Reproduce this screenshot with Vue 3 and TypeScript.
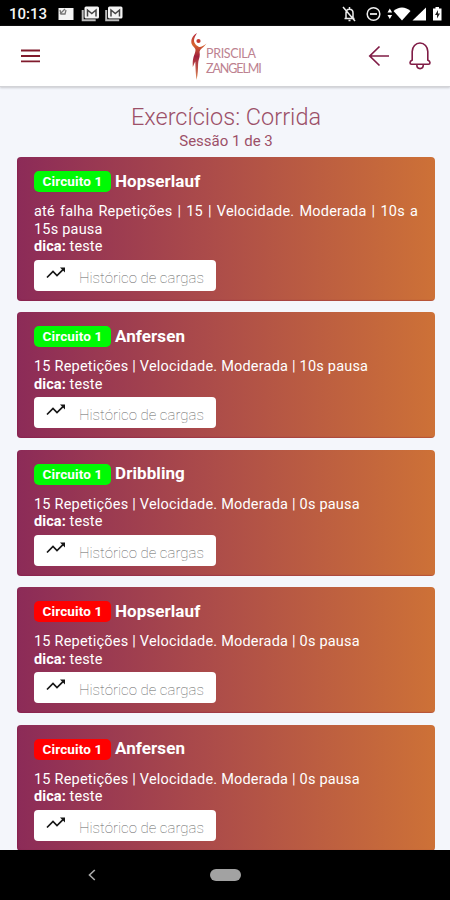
<script setup lang="ts">
interface Exercise {
  name: string
  done: boolean
  details: string
  justified?: boolean
}

const exercises: Exercise[] = [
  { name: 'Hopserlauf', done: true, details: 'até falha Repetições | 15 | Velocidade. Moderada | 10s a 15s pausa', justified: true },
  { name: 'Anfersen', done: true, details: '15 Repetições | Velocidade. Moderada | 10s pausa' },
  { name: 'Dribbling', done: true, details: '15 Repetições | Velocidade. Moderada | 0s pausa' },
  { name: 'Hopserlauf', done: false, details: '15 Repetições | Velocidade. Moderada | 0s pausa' },
  { name: 'Anfersen', done: false, details: '15 Repetições | Velocidade. Moderada | 0s pausa' },
]
</script>

<template>
  <div class="screen">
    <div class="status">
      <span class="clock">10:13</span>
      <svg class="status-left" width="66" height="16" viewBox="0 0 66 16">
        <path d="M0.500 2h15v12h-15z" fill="#f4f4f4" />
        <path d="M2 8l5-5M2 4l1 4 4 0 1-4" stroke="#777" stroke-width="1.300" fill="none" />
        <g v-for="x in [24, 47.500]" :key="x" :transform="`translate(${x} 0)`">
          <path d="M0.700 4v10.300h13" fill="none" stroke="#bbb" stroke-width="2" />
          <rect x="2.500" y="0.500" width="14.500" height="12" rx="1.500" fill="#f4f4f4" />
          <path d="M5.500 10.500V4l4.300 3.500L14 4v6.500" fill="none" stroke="#444" stroke-width="1.500" />
        </g>
      </svg>
      <svg class="status-right" width="102" height="18" viewBox="0 0 102 18">
        <g fill="none" stroke="#eee" stroke-width="1.500">
          <path d="M2.500 13.500h10M4 13V8c0-5 7-5 7 0v5M7.500 2v2M6.500 15.500h2M1 2l12 14" />
          <circle cx="31.500" cy="9" r="6.300" />
          <path d="M28 9h7" stroke-width="1.800" />
        </g>
        <g fill="#fff">
          <path d="M45.500 7.500l2.300-4 2.300 4zM45.500 10l2.300 4 2.300-4z" />
          <path d="M51.500 6c5-4.700 12-4.700 17 0L60 15.500z" />
          <path d="M84 2.500v13h-13.500z" />
          <path d="M91 3.500h2.500V2h3.500v1.500H99.500v12h-8.500z" />
        </g>
        <path d="M96 5l-3 5h2v3.500l3-5h-2z" fill="#222" />
      </svg>
    </div>
    <header class="topbar">
      <svg class="menu" width="20" height="16" viewBox="0 0 20 16">
        <path d="M1 2.500h19M1 8h19M1 13.300h19" stroke="#801a2c" stroke-width="1.800" />
      </svg>
      <div class="logo">
        <svg width="16" height="50" viewBox="0 0 16 50">
          <defs>
            <linearGradient id="dancer" x1="0" y1="0" x2="0" y2="1">
              <stop offset="0" stop-color="#b5263c" />
              <stop offset=".25" stop-color="#d8652f" />
              <stop offset=".5" stop-color="#a0203c" />
              <stop offset="1" stop-color="#dc8a55" />
            </linearGradient>
          </defs>
          <path d="M6 2C2.500 4 -.5 8 .5 12.500c.8 2.500 3 3.500 3.800 5.500 .8 2.500-1.300 5.500-2 9-.8 3-.6 6-.5 9 1-2 1.500-4 2.500-5.500.2 7 .5 13 1.200 18.500 1.500-6 1.500-11 1.600-16 .1-4 1.700-6 1.700-9.500 0-1.500-.5-2.500 0-3.500 1-2.500 4-3.500 6.700-7.500-3 2.500-5.500 3.800-7.500 3.500C6.500 15 3 13 3 9.500 3 7 4.500 4.500 6 2z" fill="url(#dancer)" />
          <circle cx="7.500" cy="10" r="2.100" fill="#c33a32" />
        </svg>
        <div class="wordmark"><span class="first">PRISCILA</span><span class="last">ZANGELMI</span></div>
      </div>
      <div class="actions">
        <svg width="22" height="22" viewBox="0 0 22 22">
          <path d="M11.500 1.500L1.800 11l9.700 9.500M1.800 11H21" fill="none" stroke="#801c46" stroke-width="1.700" />
        </svg>
        <svg width="22" height="28" viewBox="0 0 22 28">
          <path d="M3.200 18.800V9.500a7.800 8.500 0 0 1 15.600 0v9.300M3.200 18c-1.200.6-2.200 1.500-2.200 2.700 0 1 .7 1.500 1.500 1.500h17c1 0 1.500-.5 1.500-1.500 0-1.200-1-2.100-2.200-2.700M7.800 22.500c0 5.500 6.500 5.500 6.500 0" fill="none" stroke="#801c46" stroke-width="1.600" />
        </svg>
      </div>
    </header>
    <main class="content">
      <h1>Exercícios: Corrida</h1>
      <h2>Sessão 1 de 3</h2>
      <div class="list">
        <article v-for="(item, i) in exercises" :key="i" class="card">
          <div class="heading">
            <span class="badge" :class="{ done: item.done }">Circuito 1</span>
            <span class="name">{{ item.name }}</span>
          </div>
          <p class="details" :class="{ justified: item.justified }">{{ item.details }}</p>
          <p class="tip"><b>dica:</b> teste</p>
          <button class="history">
            <svg width="20" height="12" viewBox="0 0 20 12">
              <path d="M1 10.500L7 4.500l4 4L18 1.700" fill="none" stroke="#161616" stroke-width="1.700" />
              <path d="M14 .5H19V5.500z" fill="#161616" />
            </svg>
            <span>Histórico de cargas</span>
          </button>
        </article>
      </div>
    </main>
    <nav class="navbar">
      <svg width="8" height="12" viewBox="0 0 8 12">
        <path d="M6.800 1L1.500 6l5.300 5" fill="none" stroke="#aaa" stroke-width="1.600" />
      </svg>
      <span class="pill"></span>
    </nav>
  </div>
</template>

<style>
body { margin: 0; }
</style>

<style scoped>
.screen {
  box-sizing: border-box;
  width: 450px;
  height: 900px;
  display: flex;
  flex-direction: column;
  overflow: hidden;
  background: #f4f6fb;
  font-family: Roboto, "Liberation Sans", sans-serif;
}
.status {
  flex: none;
  height: 26px;
  box-sizing: border-box;
  display: flex;
  align-items: center;
  padding: 2px 6px 0 9px;
  background: #000;
  color: #f5f5f5;
}
.clock { width: 49px; font-size: 15px; font-weight: 500; letter-spacing: 0; white-space: nowrap; }
.status-right { margin-left: auto; }
.topbar {
  flex: none;
  height: 61px;
  box-sizing: border-box;
  display: flex;
  align-items: center;
  padding: 0 19px 0 20px;
  background: #fff;
  border-bottom: 1px solid #d2d3d7;
  box-shadow: 0 1px 2px #c9cacf;
}
.menu { margin-right: 151px; }
.logo { display: flex; align-items: center; }
.wordmark {
  display: flex;
  flex-direction: column;
  padding-top: 10px;
  margin-left: -1px;
  font-family: Lato, sans-serif;
  font-weight: 400;
  font-size: 12.500px;
  line-height: 15px;
  color: #bd8290;
}
.first { letter-spacing: -0.35px; }
.last { letter-spacing: -1.1px; }
.actions { margin-left: auto; display: flex; align-items: center; gap: 19px; }
.content {
  flex: 1;
  min-height: 0;
  overflow: hidden;
  display: flex;
  flex-direction: column;
  padding: 16px 15px 0 17px;
  text-align: center;
}
h1 { margin: 0; font-size: 23.500px; line-height: 28px; font-weight: 300; color: #9c5068; flex: none; }
h2 { margin: 0; font-size: 15px; line-height: 20px; font-weight: 400; color: #9c5068; flex: none; }
.list { display: flex; flex-direction: column; gap: 11.500px; padding-top: 6px; text-align: left; }
.card {
  flex: none;
  box-sizing: border-box;
  padding: 14px 17px 10px;
  border-radius: 4px;
  background: linear-gradient(90deg, #8c2b58 0%, #ad4d49 48%, #cd7137 100%);
  box-shadow: inset 1px -1px 1px rgba(130, 15, 60, 0.3);
  color: #fff;
}
.heading { display: flex; align-items: center; gap: 4px; height: 21px; margin-bottom: 11px; }
.badge {
  width: 77px;
  height: 21px;
  border-radius: 5px;
  background: #f00;
  font-size: 13.500px;
  letter-spacing: 0.15px;
  line-height: 21px;
  font-weight: 700;
  text-align: center;
  white-space: nowrap;
}
.badge.done { background: #00fa04; }
.name { font-size: 17px; line-height: 20px; font-weight: 700; letter-spacing: 0.08px; transform: translateY(-1px); }
.details, .tip { margin: 0; font-size: 14.500px; line-height: 17.500px; letter-spacing: 0.21px; }
.tip { letter-spacing: 0.1px; }
.justified { text-align: justify; }
.history {
  display: flex;
  align-items: center;
  width: 182px;
  height: 31px;
  margin: 4px 0 0;
  padding: 0 0 0 12px;
  border: 0;
  border-radius: 4px;
  background: #fff;
  font-family: inherit;
  font-size: 15px;
  font-weight: 100;
  color: #666;
  white-space: nowrap;
}
.history svg { margin: 0 13px 5px 0; flex: none; }
.history span { padding-top: 5px; }
.navbar {
  flex: none;
  height: 50px;
  display: flex;
  align-items: center;
  padding-left: 88px;
  background: #000;
}
.pill { width: 31px; height: 12px; margin-left: 114px; border-radius: 6px; background: #a2a2a2; }
</style>
